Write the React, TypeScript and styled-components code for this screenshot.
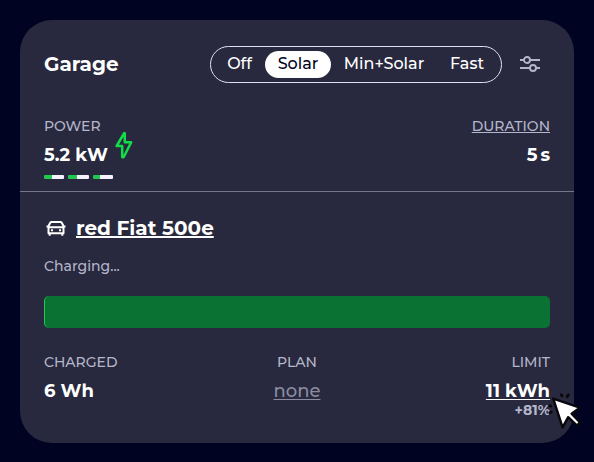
import React from "react";
import styled, { createGlobalStyle } from "styled-components";

const GlobalStyle = createGlobalStyle`
  * { box-sizing: border-box; }
  body {
    margin: 0;
    background: #010322;
    color: #fff;
    font-family: "Montserrat", "Inter", sans-serif;
    overflow: hidden;
  }
`;

const Page = styled.main`
  height: 462px;
  padding: 20px;
  background: #010322;
`;

const Card = styled.section`
  position: relative;
  height: 423px;
  padding-top: 26px;
  border-radius: 32px;
  background: #28293e;
`;

const Header = styled.header`
  display: flex;
  align-items: center;
  height: 37px;
  margin: 0 24px;
`;

const Title = styled.h3`
  margin: 0 0 2px;
  flex: 1;
  font-size: 20px;
  font-weight: 700;
  line-height: 34px;
`;

const ModeGroup = styled.div`
  display: flex;
  align-items: center;
  width: 292px;
  height: 37px;
  padding: 0 4px 0 3px;
  border: 1px solid #dfe0f0;
  border-radius: 19px;
`;

const ModeButton = styled.button<{ $active?: boolean; $width: number }>`
  width: ${(p) => p.$width}px;
  height: 27px;
  padding: 0 0 2px;
  border: 0;
  border-radius: 14px;
  background: ${(p) => (p.$active ? "#fff" : "transparent")};
  color: ${(p) => (p.$active ? "#010322" : "#fff")};
  font: 500 16px/25px "Montserrat", "Inter", sans-serif;
  text-align: center;
  white-space: nowrap;
`;

const SettingsButton = styled.div`
  display: flex;
  width: 20px;
  margin: 0 10px 2px 18px;
  color: #b5b6cb;
`;

const Readings = styled.div`
  display: flex;
  justify-content: space-between;
  height: 109px;
  padding: 33px 24px 0;
  border-bottom: 1px solid #757688;
`;

const Column = styled.div<{ $align: "flex-start" | "center" | "flex-end" }>`
  display: flex;
  flex: 1;
  flex-direction: column;
  align-items: ${(p) => p.$align};
`;

const Label = styled.span<{ $underlined?: boolean }>`
  color: #b5b6cb;
  font-size: 14px;
  font-weight: 500;
  line-height: 20px;
  text-decoration: ${(p) => (p.$underlined ? "underline" : "none")};
  text-underline-offset: 1px;
  text-decoration-thickness: 1px;
`;

const ValueRow = styled.div`
  display: flex;
  gap: 7px;
  height: 28px;
  margin-top: 5px;
`;

const Value = styled.span<{ $muted?: boolean; $underlined?: boolean }>`
  color: ${(p) => (p.$muted ? "#8b8ca0" : "#fff")};
  font-size: 18px;
  font-weight: ${(p) => (p.$muted ? 500 : 700)};
  line-height: 28px;
  text-decoration: ${(p) => (p.$underlined ? "underline" : "none")};
  text-decoration-thickness: 1px;
  text-decoration-skip-ink: none;
  text-underline-offset: 2px;
`;

const Duration = styled(Value)`
  display: flex;
  gap: 3px;
`;

const BoltSvg = styled.svg`
  display: block;
  width: 18px;
  height: 28px;
  margin-top: -10px;
`;

const Phases = styled.div`
  display: flex;
  gap: 4px;
  margin-top: 6px;
`;

const Phase = styled.div<{ $filled: number; $width: number }>`
  width: ${(p) => p.$width}px;
  height: 4px;
  border-radius: 1px;
  background: linear-gradient(to right, #24c750 ${(p) => p.$filled}px, #f4f2fe ${(p) => p.$filled}px);
`;

const Vehicle = styled.div`
  padding: 22px 24px 0;
`;

const VehicleTitle = styled.div`
  display: flex;
  align-items: center;
  gap: 8px;
  height: 28px;
`;

const VehicleName = styled.span`
  font-size: 20px;
  font-weight: 700;
  line-height: 28px;
  text-decoration: underline;
  text-decoration-thickness: 2px;
  text-underline-offset: 1px;
`;

const Status = styled.div`
  margin-top: 14px;
  color: #b5b6cb;
  font-size: 14px;
  font-weight: 500;
  line-height: 20px;
`;

const SocBar = styled.div`
  height: 32px;
  margin-top: 20px;
  overflow: hidden;
  border-radius: 5px;
  border-left: 1px solid #24c750;
  background: #0a7232;
`;

const Details = styled.div`
  display: flex;
  margin-top: 24px;
`;

const Surplus = styled.span`
  margin-top: -4px;
  color: #b5b6cb;
  font-size: 14px;
  font-weight: 700;
  line-height: 18px;
`;

const CursorSvg = styled.svg`
  position: absolute;
  left: 526px;
  top: 368px;
  width: 42px;
  height: 46px;
`;

const Bolt = () => (
  <BoltSvg viewBox="0 0 18 28" fill="none" stroke="#12dc49" strokeWidth="2.5" strokeLinejoin="round">
    <path d="M9.3 2 L1.6 15 H7.2 V26 Q8.4 26.4 9 25.5 L16.2 11.3 H9.8 V2.3 Z" />
  </BoltSvg>
);

const Sliders = () => (
  <svg width="20" height="18" viewBox="0 0 20 18" fill="none" stroke="currentColor" strokeWidth="1.9">
    <path d="M0 5h4M10 5h10M0 13h10M16 13h4" />
    <circle cx="7" cy="5" r="3" />
    <circle cx="13" cy="13" r="3" />
  </svg>
);

const Car = () => (
  <svg width="24" height="24" viewBox="0 0 24 24" fill="none" stroke="#fff" strokeWidth="2" strokeLinejoin="round">
    <path d="M4.3 10.5 6.2 6.8q.4-.8 1.5-.8h8.6q1.1 0 1.5.8l1.9 3.7M4.5 11.3h15v6h-15zM2.5 10.6h2.2M19.3 10.6h2.2M5.7 17.5v2.3M18.3 17.5v2.3" />
    <path d="M7 14.3h2M15 14.3h2" />
  </svg>
);

const Cursor = () => (
  <CursorSvg viewBox="546 388 42 46">
    <g stroke="#08080d" strokeWidth="2.8" strokeLinecap="round">
      <path d="M561.3 394.8l.7 1.2M568.3 395l-1.2 1.8M549.6 405.8l1.2.2M549.8 412.8l1.6-.9" />
    </g>
    <path
      d="M553.2 398.6 L579.8 407.6 L571.6 413.6 L580 422.3 L577 425.6 L568.2 417.2 L562.6 427.4 Z"
      fill="#fff"
      stroke="#08080d"
      strokeWidth="2.4"
      strokeLinejoin="round"
    />
  </CursorSvg>
);

const modes = [
  { name: "Off", width: 51 },
  { name: "Solar", width: 66, active: true },
  { name: "Min+Solar", width: 106 },
  { name: "Fast", width: 60 },
];

const phases = [
  { width: 20, filled: 8 },
  { width: 21, filled: 9 },
  { width: 20, filled: 7 },
];

export default function App() {
  return (
    <Page>
      <GlobalStyle />
      <Card>
        <Header>
          <Title>Garage</Title>
          <ModeGroup>
            {modes.map((m) => (
              <ModeButton key={m.name} $active={m.active} $width={m.width}>
                {m.name}
              </ModeButton>
            ))}
          </ModeGroup>
          <SettingsButton>
            <Sliders />
          </SettingsButton>
        </Header>
        <Readings>
          <Column $align="flex-start">
            <Label>POWER</Label>
            <ValueRow>
              <Value>5.2 kW</Value>
              <Bolt />
            </ValueRow>
            <Phases>
              {phases.map((p, i) => (
                <Phase key={i} $width={p.width} $filled={p.filled} />
              ))}
            </Phases>
          </Column>
          <Column $align="flex-end">
            <Label $underlined>DURATION</Label>
            <ValueRow>
              <Duration>
                <span>5</span>
                <span>s</span>
              </Duration>
            </ValueRow>
          </Column>
        </Readings>
        <Vehicle>
          <VehicleTitle>
            <Car />
            <VehicleName>red Fiat 500e</VehicleName>
          </VehicleTitle>
          <Status>Charging...</Status>
          <SocBar />
          <Details>
            <Column $align="flex-start">
              <Label>CHARGED</Label>
              <ValueRow>
                <Value>6 Wh</Value>
              </ValueRow>
            </Column>
            <Column $align="center">
              <Label>PLAN</Label>
              <ValueRow>
                <Value $muted $underlined>none</Value>
              </ValueRow>
            </Column>
            <Column $align="flex-end">
              <Label>LIMIT</Label>
              <ValueRow>
                <Value $underlined>11 kWh</Value>
              </ValueRow>
              <Surplus>+81%</Surplus>
            </Column>
          </Details>
        </Vehicle>
        <Cursor />
      </Card>
    </Page>
  );
}
